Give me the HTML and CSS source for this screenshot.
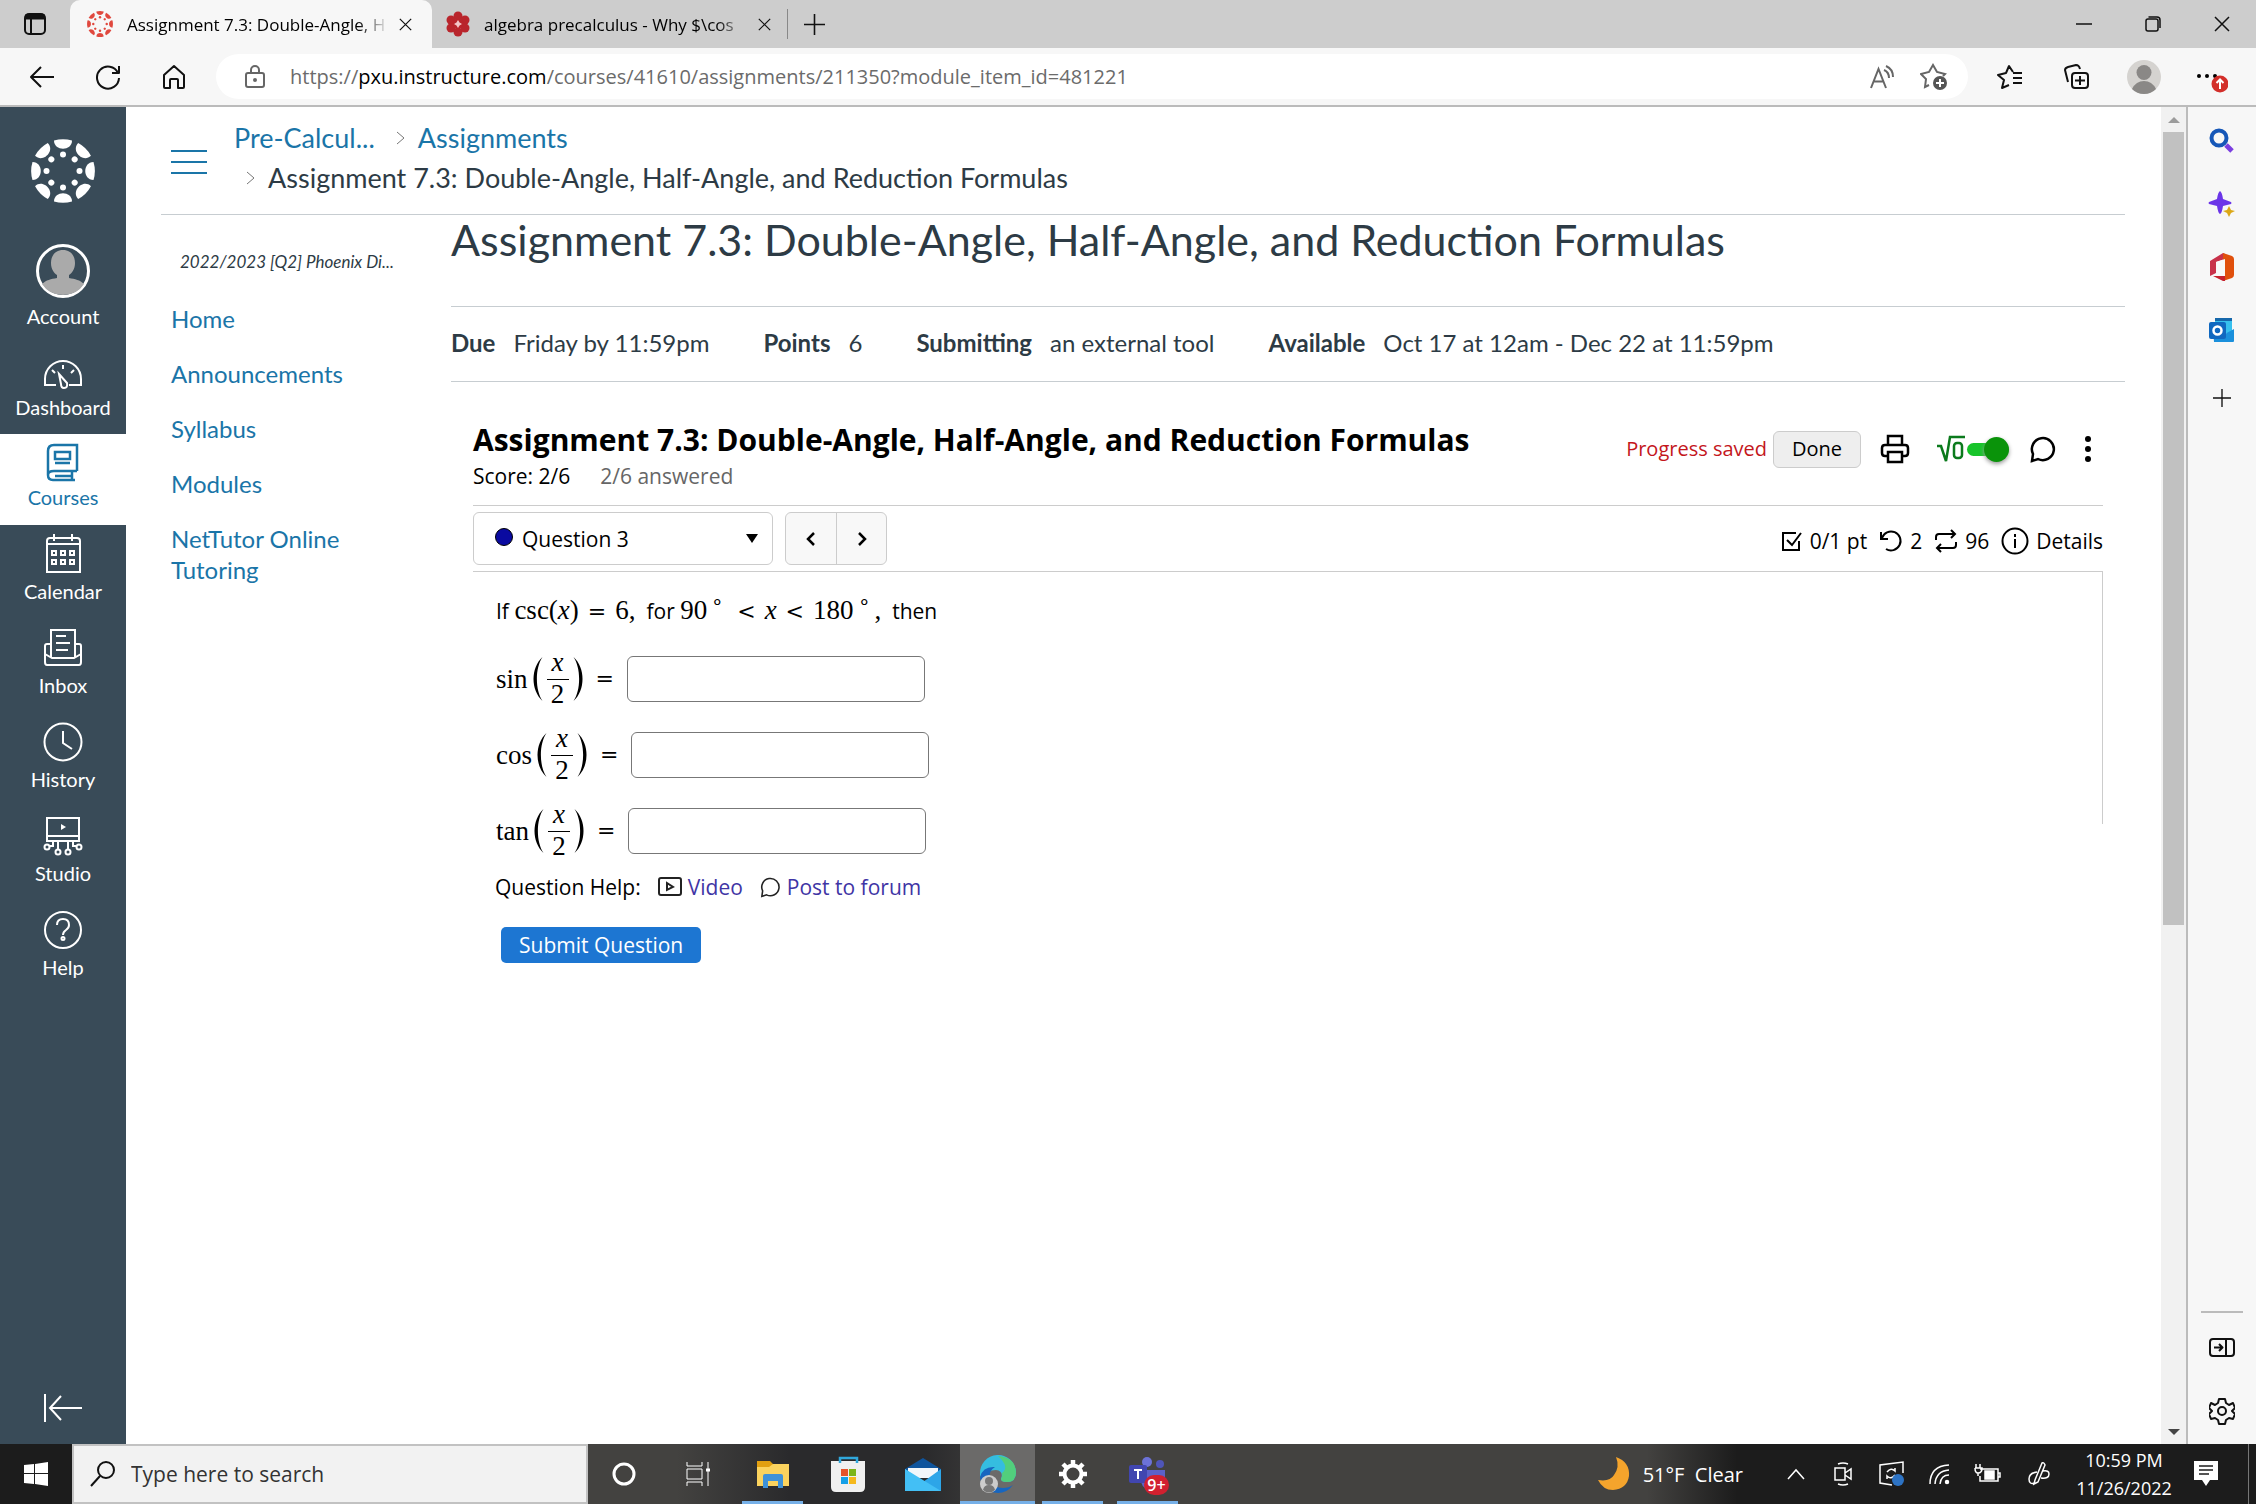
FILE: index.html
```html
<!DOCTYPE html>
<html lang="en">
<head>
<meta charset="utf-8">
<title>Assignment 7.3: Double-Angle, Half-Angle, and Reduction Formulas</title>
<link rel="stylesheet" href="styles.css">
</head>
<body>
<svg width="0" height="0" class="defs" aria-hidden="true">
  <defs>
    <g id="petals"><path d="M23 1.500a31 31 0 0 1 18 0c0 11-18 11-18 0z"/><circle cx="32" cy="15.500" r="3"/></g>
    <symbol id="canvas-mark" viewBox="0 0 64 64">
      <use href="#petals"/><use href="#petals" transform="rotate(45 32 32)"/><use href="#petals" transform="rotate(90 32 32)"/><use href="#petals" transform="rotate(135 32 32)"/><use href="#petals" transform="rotate(180 32 32)"/><use href="#petals" transform="rotate(225 32 32)"/><use href="#petals" transform="rotate(270 32 32)"/><use href="#petals" transform="rotate(315 32 32)"/>
    </symbol>
    <symbol id="x" viewBox="0 0 16 16"><path d="M1 1l14 14M15 1L1 15"/></symbol>
    <symbol id="plus" viewBox="0 0 20 20"><path d="M10 0v20M0 10h20"/></symbol>
    <symbol id="bubble" viewBox="0 0 26 28"><path d="M3 19a11 11 0 1 1 5 5l-6 2z"/></symbol>
    <symbol id="paren" viewBox="0 0 12 46"><path d="M10.500 1C-1.500 12-1.500 34 10.500 45C3 34 3 12 10.500 1z" fill="#000"/></symbol>
  </defs>
</svg>

<header class="tabs">
  <button class="tab-menu" aria-label="Tab actions"><svg width="24" height="24" viewBox="0 0 24 24" fill="none" stroke="#111" stroke-width="2"><rect x="2" y="2" width="20" height="20" rx="4"/><path d="M2 5h20" stroke-width="5"/><path d="M8 6v15"/></svg></button>
  <div class="tab active">
    <svg width="26" height="26" fill="#e0483e"><use href="#canvas-mark"/></svg>
    <span class="tab-title">Assignment 7.3: Double-Angle, H</span>
    <button aria-label="Close tab"><svg class="ln" width="13" height="13"><use href="#x"/></svg></button>
  </div>
  <div class="tab">
    <svg width="24" height="26" viewBox="0 0 24 26" fill="#b9252c"><circle cx="12" cy="5" r="4.500"/><circle cx="12" cy="21" r="4.500"/><circle cx="5" cy="9" r="4.500"/><circle cx="19" cy="9" r="4.500"/><circle cx="5" cy="17" r="4.500"/><circle cx="19" cy="17" r="4.500"/><circle cx="12" cy="13" r="5"/><path d="M12 9l1.500 2.500 2.500 1.500-2.500 1.500-1.500 2.500-1.500-2.500-2.500-1.500 2.500-1.500z" fill="#f3c6c8"/></svg>
    <span class="tab-title">algebra precalculus - Why $\cos</span>
    <button aria-label="Close tab"><svg class="ln" width="13" height="13"><use href="#x"/></svg></button>
  </div>
  <button class="new-tab" aria-label="New tab"><svg class="ln" width="21" height="21"><use href="#plus"/></svg></button>
  <div class="win">
    <button aria-label="Minimize"><svg class="ln" width="16" height="16"><path d="M0 8h16"/></svg></button>
    <button aria-label="Restore"><svg class="ln" width="16" height="16" fill="none"><rect x="1" y="3" width="12" height="12" rx="2"/><path d="M3.500 1H12q3 0 3 3v8"/></svg></button>
    <button aria-label="Close"><svg class="ln" width="16" height="16"><use href="#x"/></svg></button>
  </div>
</header>

<div class="toolbar">
  <div class="history">
    <button aria-label="Back"><svg class="ln2" width="26" height="24" viewBox="0 0 26 24"><path d="M25 12H2M12 2L2 12l10 10"/></svg></button>
    <button aria-label="Refresh"><svg class="ln2" width="26" height="26" viewBox="0 0 26 26"><path d="M23 9A11 11 0 1 0 24 14M24 2v7h-7"/></svg></button>
    <button aria-label="Home"><svg class="ln2" width="24" height="26" viewBox="0 0 24 26"><path d="M2 11L12 2l10 9v12q0 1-1 1h-5v-8q0-1-1-1H9q-1 0-1 1v8H3q-1 0-1-1z"/></svg></button>
  </div>
  <div class="address">
    <svg class="lock" width="20" height="24" viewBox="0 0 20 24" fill="none" stroke="#666" stroke-width="2"><rect x="1" y="8" width="18" height="14" rx="2"/><path d="M6 8V5a4 4 0 0 1 8 0v3"/><circle cx="10" cy="15" r="1" fill="#666"/></svg>
    <div class="url" role="textbox" aria-label="Address">https://<b>pxu.instructure.com</b>/courses/41610/assignments/211350?module_item_id=481221</div>
    <button aria-label="Read aloud"><svg class="gray" width="26" height="26" viewBox="0 0 26 26"><path d="M2 24L9.500 5 17 24M4.500 17.500h10M15 6q5 2 5 8M17 2q7 3 7 11"/></svg></button>
    <button aria-label="Add to favorites"><svg class="gray" width="28" height="28" viewBox="0 0 28 28"><path d="M9 22l-4 2 1-8-5-5 8-2 4-7 4 7 8 2-2 2"/><circle cx="20" cy="20" r="7" fill="#555" stroke="none"/><path d="M20 16v8M16 20h8" stroke="#fff"/></svg></button>
  </div>
  <div class="tools">
    <button aria-label="Favorites"><svg class="ln2" width="26" height="26" viewBox="0 0 26 26"><path d="M16 8l-4-6-3 7-8 2 6 5-2 8 7-3M16 9h9M16 14h9M16 19h9"/></svg></button>
    <button aria-label="Collections"><svg class="ln2" width="26" height="26" viewBox="0 0 26 26"><rect x="8" y="9" width="16" height="15" rx="3"/><path d="M16 12v9M11 16.500h10M4 18Q2 10 1 6q0-2 3-3l8-2q3 0 4 4"/></svg></button>
    <button aria-label="Profile"><svg width="34" height="34" viewBox="0 0 34 34"><circle cx="17" cy="17" r="17" fill="#d5d3d0"/><circle cx="17" cy="12.500" r="7.500" fill="#8a8886"/><path d="M5 29q4-8 12-8t12 8q-5 5-12 5T5 29z" fill="#8a8886"/></svg></button>
    <button aria-label="Settings and more"><svg width="34" height="34" viewBox="0 0 34 34"><circle cx="5" cy="16" r="2"/><circle cx="13" cy="16" r="2"/><circle cx="21" cy="16" r="2"/><circle cx="26" cy="24" r="8.500" fill="#d32f2a"/><path d="M26 29V19.500M22.500 23l3.500-3.500 3.500 3.500" fill="none" stroke="#fff" stroke-width="2"/></svg></button>
  </div>
</div>

<div class="window">
  <nav class="global" aria-label="Global navigation">
    <a href="#" class="logo" aria-label="Canvas"><svg width="64" height="64" fill="#fff"><use href="#canvas-mark"/></svg></a>
    <a href="#" class="account"><svg width="54" height="54" viewBox="0 0 54 54"><circle cx="27" cy="27" r="25.500" fill="#394b58" stroke="#fff" stroke-width="3"/><path d="M27 6c8 0 12 6 12 13 0 6-3 10-6 12v3c6 1 11 2 15 6q-7 11-21 11T6 40c4-4 9-5 15-6v-3c-3-2-6-6-6-12 0-7 4-13 12-13z" fill="#aaa" stroke="none"/></svg>Account</a>
    <a href="#" class="dash"><svg width="40" height="36" viewBox="0 0 40 36"><path d="M13 30H2v-6a18 18 0 0 1 36 0v6H26M20 10v4M9 15l3 3M31 15l-3 3M16 19l8 9q1 5-3 5-3 0-3-4z"/></svg>Dashboard</a>
    <a href="#" class="current"><svg width="40" height="40" viewBox="0 0 40 40"><path d="M34 28V2H11Q5 2 5 8v24q0 5 5 5h22M34 28H11q-6 0-6 4M29 28v9M12 33h17M12 9h15v7H12zM12 20h15" stroke-width="2.500"/></svg>Courses</a>
    <a href="#"><svg width="40" height="40" viewBox="0 0 40 40"><path d="M4 38V7q0-3 3-3h27q3 0 3 3v31zM4 10h33M11 0v7M29 0v7M9 17h4v4H9zM18 17h4v4h-4zM27 17h4v4h-4zM9 26h4v4H9zM18 26h4v4h-4zM27 26h4v4h-4z"/></svg>Calendar</a>
    <a href="#"><svg width="40" height="40" viewBox="0 0 40 40"><path d="M8 30V2h24v28M8 16H4q-2 0-2 2v16q0 3 2 3h32q2 0 2-3V18q0-2-2-2h-4M2 26l7 4h22l7-4M13 8h10M13 15h14M13 22h12"/></svg>Inbox</a>
    <a href="#"><svg width="40" height="40" viewBox="0 0 40 40"><circle cx="20" cy="20" r="18.500"/><path d="M20 9v12l9 6"/></svg>History</a>
    <a href="#"><svg width="40" height="40" viewBox="0 0 40 40"><path d="M4 2h32v23H4zM4 20h32M10 25v5H6M30 25v5h4M15 25v9M25 25v9"/><circle cx="4" cy="31" r="2.500"/><circle cx="36" cy="31" r="2.500"/><circle cx="15" cy="36" r="2.500"/><circle cx="25" cy="36" r="2.500"/><path d="M18 8l5 3-5 3z" fill="#fff" stroke="none"/></svg>Studio</a>
    <a href="#"><svg width="40" height="40" viewBox="0 0 40 40"><circle cx="20" cy="20" r="18"/><path d="M14 15q0-6 6-6t6 6q0 3-3 5t-3 5"/><circle cx="20" cy="28.500" r="1" stroke-width="3"/></svg>Help</a>
    <button class="collapse" aria-label="Minimize navigation"><svg width="40" height="30" viewBox="0 0 40 30"><path d="M2 1v28M39 15H7M18 3L7 15l11 12"/></svg></button>
  </nav>

  <main class="page">
    <div class="crumb-bar">
      <button class="burger" aria-label="Course menu"><i></i><i></i><i></i></button>
      <div class="crumbs">
        <div><a href="#">Pre-Calcul...</a><svg class="chev" width="10" height="16"><path d="M1 2l7 6-7 6"/></svg><a href="#">Assignments</a></div>
        <div class="second"><svg class="chev" width="10" height="16"><path d="M1 2l7 6-7 6"/></svg><span>Assignment 7.3: Double-Angle, Half-Angle, and Reduction Formulas</span></div>
      </div>
    </div>
    <div class="columns">
      <nav class="course" aria-label="Course navigation">
        <em>2022/2023 [Q2] Phoenix Di...</em>
        <a href="#">Home</a><a href="#">Announcements</a><a href="#">Syllabus</a><a href="#">Modules</a><a href="#">NetTutor Online Tutoring</a>
      </nav>
      <article>
        <h1>Assignment 7.3: Double-Angle, Half-Angle, and Reduction Formulas</h1>
        <dl class="details">
          <div><dt>Due</dt><dd>Friday by 11:59pm</dd></div>
          <div><dt>Points</dt><dd>6</dd></div>
          <div><dt>Submitting</dt><dd>an external tool</dd></div>
          <div><dt>Available</dt><dd>Oct 17 at 12am - Dec 22 at 11:59pm</dd></div>
        </dl>
        <section class="tool">
          <header class="tool-head">
            <div>
              <h2>Assignment 7.3: Double-Angle, Half-Angle, and Reduction Formulas</h2>
              <p>Score: 2/6<span class="answered">2/6 answered</span></p>
            </div>
            <div class="tool-actions">
              <span class="saved">Progress saved</span>
              <button class="done">Done</button>
              <button class="print" aria-label="Print"><svg width="30" height="30" viewBox="0 0 30 30" fill="none" stroke="#000" stroke-width="2.500"><path d="M8 11V2h14v9M8 22H5q-3 0-3-3v-5q0-3 3-3h20q3 0 3 3v5q0 3-3 3h-3M8 18h14v10H8z"/></svg></button>
              <label class="math-toggle"><svg width="30" height="30" viewBox="0 0 30 30" fill="none" stroke="#0b7a1c" stroke-width="2.500"><path d="M1 12h4l5 15 4-24h15"/><rect x="18" y="9" width="8" height="15" rx="3"/></svg><input type="checkbox" checked aria-label="Equation editor"></label>
              <button class="talk" aria-label="Messages"><svg width="26" height="28" fill="none" stroke="#000" stroke-width="2.500"><use href="#bubble"/></svg></button>
              <button class="more" aria-label="More"><svg width="8" height="28"><circle cx="4" cy="4" r="3"/><circle cx="4" cy="14" r="3"/><circle cx="4" cy="24" r="3"/></svg></button>
            </div>
          </header>
          <div class="question-bar">
            <div class="picker"><span class="dot"></span><select aria-label="Question"><option>Question 3</option></select><svg class="arrow" width="12" height="10"><path d="M0 1h12L6 10z"/></svg></div>
            <div class="steps"><button aria-label="Previous question"><svg width="10" height="16"><path d="M8 2L2 8l6 6"/></svg></button><button aria-label="Next question"><svg width="10" height="16"><path d="M2 2l6 6-6 6"/></svg></button></div>
            <div class="stats">
              <span><svg width="22" height="22" viewBox="0 0 22 22"><path d="M18 11v9H2V3h13M6 10l5 5 9-12"/></svg>0/1 pt</span>
              <span><svg width="24" height="24" viewBox="0 0 24 24"><path d="M2 3v7h7M3 9a9.500 9.500 0 1 1 4 11"/></svg>2</span>
              <span><svg width="24" height="24" viewBox="0 0 24 24"><path d="M2 11V8q0-3 3-3h16M17 1l4 4-4 4M22 13v3q0 3-3 3H3M7 15l-4 4 4 4"/></svg>96</span>
              <button><svg width="28" height="28" viewBox="0 0 28 28"><circle cx="14" cy="14" r="12.500"/><path d="M14 12v9M14 7v3"/></svg>Details</button>
            </div>
          </div>
          <form class="question">
            <p>If <span class="m">csc(<i>x</i>)</span><span class="op">=</span><span class="m">6,</span> &nbsp;for <span class="m">90<sup>∘</sup></span><span class="op">&lt;</span><span class="m"><i>x</i></span><span class="op">&lt;</span><span class="m">180<sup>∘</sup>,</span> &nbsp;then</p>
            <div class="row"><label for="a1"><span class="fn">sin</span><svg width="12" height="46"><use href="#paren"/></svg><span class="frac"><i>x</i><span>2</span></span><svg class="flip" width="12" height="46"><use href="#paren"/></svg><span class="op">=</span></label><input id="a1" type="text"></div>
            <div class="row"><label for="a2"><span class="fn">cos</span><svg width="12" height="46"><use href="#paren"/></svg><span class="frac"><i>x</i><span>2</span></span><svg class="flip" width="12" height="46"><use href="#paren"/></svg><span class="op">=</span></label><input id="a2" type="text"></div>
            <div class="row"><label for="a3"><span class="fn">tan</span><svg width="12" height="46"><use href="#paren"/></svg><span class="frac"><i>x</i><span>2</span></span><svg class="flip" width="12" height="46"><use href="#paren"/></svg><span class="op">=</span></label><input id="a3" type="text"></div>
          </form>
          <div class="help"><span>Question Help:</span>
            <a href="#"><svg width="24" height="20" viewBox="0 0 24 20"><rect x="1" y="1" width="22" height="17" rx="2"/><path d="M9 6l6 4-6 3z"/></svg>Video</a>
            <a href="#"><svg width="21" height="22"><use href="#bubble"/></svg>Post to forum</a>
          </div>
          <button class="submit">Submit Question</button>
        </section>
      </article>
    </div>
  </main>

  <div class="scroll" aria-hidden="true"><svg width="12" height="8"><path d="M0 7l6-6 6 6z" fill="#9b9b9b"/></svg><div class="track"><div class="thumb"></div></div><svg width="12" height="8"><path d="M0 1l6 6 6-6z" fill="#444"/></svg></div>

  <aside class="edge">
    <button aria-label="Search"><svg width="26" height="26" viewBox="0 0 26 26" fill="none"><path d="M17 17l6 6" stroke="#7b3fe0" stroke-width="5"/><circle cx="10" cy="10" r="7.500" stroke="#1657b8" stroke-width="4"/></svg></button>
    <button aria-label="Discover"><svg width="28" height="28" viewBox="0 0 28 28"><path d="M12 1q2 1 3 8l8 3q1 1 0 2l-8 2q-1 7-3 8-2-1-3-8l-8-2q-1-1 0-2l8-3q1-7 3-8z" fill="#6b35e8"/><path d="M21 16l2 4 4 1-4 2-2 4-2-4-4-2 4-1z" fill="#dca818"/></svg></button>
    <button aria-label="Office"><svg width="26" height="30" viewBox="0 0 26 30"><path d="M1 9l13-8 2 1v5l-9 3v11l-6 3z" fill="#c8324a"/><path d="M14 1l9 3q2 1 2 3v16q0 2-2 3l-9 3z" fill="#e0500c"/><path d="M4 24h12v5h-2z" fill="#c6212e"/><path d="M7 10l9-3v17H8z" fill="#f8f8f8"/></svg></button>
    <button aria-label="Outlook"><svg width="26" height="26" viewBox="0 0 26 26"><path d="M6 1h17v15H6z" fill="#36c0ee"/><path d="M6 1h17v3H6z" fill="#1668ab"/><path d="M4 12l10 6 11-6v12q0 1-1 1H5z" fill="#1a90dc"/><rect x="0" y="5" width="17" height="17" rx="2" fill="#1068c0"/><circle cx="8.500" cy="13.500" r="4" fill="none" stroke="#fff" stroke-width="2.500"/></svg></button>
    <button class="add" aria-label="Add"><svg class="ln" width="18" height="18"><use href="#plus"/></svg></button>
    <hr>
    <button aria-label="Hide sidebar"><svg class="ln2" width="26" height="20" viewBox="0 0 26 20"><rect x="1" y="1" width="24" height="17" rx="3"/><path d="M17 1v17M5 9.500h8M10 6l3.500 3.500L10 13"/></svg></button>
    <button aria-label="Settings"><svg class="ln2" width="26" height="28" viewBox="0 0 26 28"><path d="M10 2h6l1 4 3 2 4-2 2 5-3 3 3 3-2 5-4-1-3 2-1 4h-6l-1-4-3-2-4 1-2-5 3-3-3-3 2-5 4 2 3-2z"/><circle cx="13" cy="14" r="4"/></svg></button>
  </aside>
</div>

<footer class="taskbar">
  <button class="start" aria-label="Start"><svg width="24" height="24" viewBox="0 0 24 24" fill="#fff"><path d="M0 3l10-1v9H0zM11 2l13-2v11H11zM0 12h10v10L0 21zM11 12h13v12l-13-2z"/></svg></button>
  <label class="task-search"><svg width="26" height="26" viewBox="0 0 26 26" fill="none" stroke="#111" stroke-width="2"><circle cx="16" cy="9" r="8"/><path d="M10 15L1 25"/></svg><input type="text" placeholder="Type here to search" aria-label="Search"></label>
  <div class="apps">
    <button class="cortana" aria-label="Cortana"><svg width="24" height="24"><circle cx="12" cy="12" r="10" fill="none" stroke="#fff" stroke-width="3"/></svg></button>
    <button aria-label="Task view"><svg width="26" height="24" fill="none" stroke="#fff" stroke-width="1"><path d="M2 0v4h15V0M2 24v-4h15v4M2 7h15v10H2zM23 0v24"/><path d="M21 8h4" stroke-width="3"/></svg></button>
    <button class="open" aria-label="File Explorer"><svg width="34" height="28" viewBox="0 0 34 28"><path d="M1 1h13l3 3h14v8H1z" fill="#e2a010"/><path d="M1 7h12l4-3h16v22H1z" fill="#fbd35e"/><path d="M7 28V16q0-2 2-2h16q2 0 2 2v12h-5v-7H12v7z" fill="#3f92d8"/></svg></button>
    <button aria-label="Store"><svg width="36" height="36" viewBox="0 0 36 36"><path d="M10 9V2h17v7" fill="none" stroke="#30a8dc" stroke-width="2.500"/><path d="M1 5h34v26q0 5-5 5H6q-5 0-5-5z" fill="#f0f0f0"/><path d="M10 5v2M27 5v2" stroke="#30a8dc" stroke-width="2.500"/><path d="M11 13h7v7h-7z" fill="#e5532a"/><path d="M19 13h7v7h-7z" fill="#7cb518"/><path d="M11 21h7v7h-7z" fill="#15a0e8"/><path d="M19 21h7v7h-7z" fill="#f5b81c"/></svg></button>
    <button aria-label="Mail"><svg width="38" height="34" viewBox="0 0 38 34"><path d="M1 12L19 1l18 11v8H1z" fill="#0f549c"/><path d="M4 11h30v10H4z" fill="#f2f6fa"/><path d="M1 12l18 13 18-13v22H1z" fill="#2da5e8"/><path d="M1 12l36 22H1z" fill="#43bff5"/></svg></button>
    <button class="open on" aria-label="Edge"><svg width="38" height="38" viewBox="0 0 38 38"><path d="M1 19A18 18 0 0 1 37 17q0 10-9 10-6 0-6-3 3-8-5-9Q8 15 1 22z" fill="#35bde0"/><path d="M19 1q17 1 18 16 0 10-9 10-6 0-6-3 2-3 1-6Q31 12 19 1z" fill="#52cf7c"/><path d="M1 22Q4 11 16 12q-7 4-5 12 3 9 13 9 6 0 10-3-6 8-15 8Q3 37 1 22z" fill="#1766c0"/><circle cx="10" cy="29" r="9" fill="#ccc"/><circle cx="10" cy="26" r="4" fill="#777"/><path d="M4 35q1-5 6-5t6 5q-6 5-12 0z" fill="#777"/></svg></button>
    <button class="open" aria-label="Settings"><svg width="28" height="28" viewBox="0 0 28 28"><circle cx="14" cy="14" r="8.500" fill="none" stroke="#fff" stroke-width="4"/><path d="M14 0v5M14 23v5M0 14h5M23 14h5M4 4l4 4M20 20l4 4M24 4l-4 4M4 24l4-4" stroke="#fff" stroke-width="4.500"/></svg></button>
    <button class="open teams" aria-label="Teams"><svg width="38" height="34" viewBox="0 0 38 34"><circle cx="18" cy="5" r="5" fill="#6c72d8"/><circle cx="31" cy="7" r="4" fill="#4f55b8"/><path d="M12 13h24v12q-2 8-12 8t-12-8z" fill="#5b61c8"/><rect y="8" width="18" height="18" rx="2" fill="#4146b0"/><path d="M5 13h8M9 13v9" stroke="#fff" stroke-width="2"/></svg><span class="badge">9+</span></button>
  </div>
  <div class="tray">
    <button class="weather"><svg width="34" height="34" viewBox="0 0 34 34"><path d="M19 0q14 5 13 19-2 13-16 14Q6 33 1 23q12 2 16-5 6-8 2-18z" fill="#f5a42c"/></svg>51°F &nbsp;Clear</button>
    <button aria-label="Hidden icons"><svg width="18" height="12"><path d="M1 11l8-9 8 9"/></svg></button>
    <button aria-label="Meet now"><svg width="20" height="24"><path d="M1 6h10v12H1zM11 11l6-4v10l-6-4M4 2q5-2 10 0M4 22q5 2 10 0"/></svg></button>
    <button aria-label="Sync"><svg width="26" height="26"><path d="M24 12V1L1 4v18l12 2M8 11q4-5 8-1v-3M16 14q-4 5-8 1v3"/><circle cx="19" cy="19" r="6" fill="#2d73c4" stroke="none"/></svg></button>
    <button aria-label="Wi-Fi"><svg width="22" height="22"><path d="M1 21Q1 3 20 2M6 21Q7 8 20 7M11 21q1-9 9-9"/><circle cx="18" cy="19" r="1.500" fill="#fff"/></svg></button>
    <button aria-label="Battery"><svg width="28" height="20"><path d="M6 5h18v12H6v-5M24 9h2v4h-2"/><path d="M11 7h9v8h-9z" fill="#fff"/><path d="M2 0v4M6 0v4M1 4h7q0 5-4 5-3 0-3-5M4 9v3"/></svg></button>
    <button class="pen" aria-label="Pen"><svg width="22" height="24"><path d="M14 1L7 18l-1 4 4-2 7-17q-1-3-3-2zM9 10q-8 1-8 7 0 6 6 4M15 9q6-1 6 3 0 5-8 4"/></svg></button>
    <time>10:59 PM<br>11/26/2022</time>
    <button aria-label="Notifications"><svg width="24" height="26" viewBox="0 0 24 26"><path d="M0 0h24v19h-8l-4 6-4-6H0z" fill="#fff" stroke="none"/><path d="M5 5h14M5 9h14M5 13h10" stroke="#1c1c1c"/></svg></button>
    <span class="peek"></span>
  </div>
</footer>
</body>
</html>
```
FILE: styles.css
```css
* { box-sizing: border-box; }
body {
  margin: 0;
  min-height: 100vh;
  display: flex;
  flex-direction: column;
  background: #fff;
  font-family: "Open Sans", "Noto Sans", sans-serif;
  font-size: 20px;
  color: #000;
}
.defs { position: absolute; }
button {
  border: 0;
  background: none;
  padding: 0;
  font: inherit;
  color: inherit;
  display: flex;
  align-items: center;
  justify-content: center;
}
a { text-decoration: none; color: inherit; }
h1, h2, p, dl, dd { margin: 0; font-weight: 400; }
.ln { fill: none; stroke: #111; stroke-width: 1.500; }
.ln2 { fill: none; stroke: #111; stroke-width: 2; stroke-linejoin: round; }
.gray { fill: none; stroke: #666; stroke-width: 2; }

/* tab strip */
.tabs { display: flex; height: 48px; background: #cdcdcd; font-size: 17px; }
.tab-menu { width: 70px; }
.tab { display: flex; align-items: center; width: 355px; padding: 0 16px 0 14px; }
.tab.active { width: 362px; padding: 0 20px 0 17px; background: #f7f7f7; border-radius: 10px 10px 0 0; }
.tab-title {
  flex: 1;
  margin: 0 10px 0 14px;
  white-space: nowrap;
  mask-image: linear-gradient(to right, #000 88%, transparent);
}
.new-tab { align-self: center; height: 30px; padding: 0 16px; border-left: 1px solid #888; }
.win { display: flex; margin-left: auto; }
.win button { width: 69px; }

/* toolbar */
.toolbar { display: flex; align-items: center; height: 59px; background: #f7f7f7; border-bottom: 2px solid #bbb; }
.history { display: flex; width: 216px; padding-left: 9px; }
.history button { width: 66px; }
.address { flex: 1; display: flex; align-items: center; gap: 25px; height: 45px; padding: 0 20px 0 29px; border-radius: 23px; background: #fff; }
.url { flex: 1; font-size: 20px; color: #6b6b6b; }
.url b { font-weight: 400; color: #000; }
.tools { display: flex; width: 288px; padding-left: 8px; }
.tools button { width: 67px; }

/* window */
.window { flex: 1; display: flex; }
.global {
  display: flex;
  flex-direction: column;
  width: 126px;
  background: #394b58;
  color: #fff;
  font: 20px/24px Lato, sans-serif;
}
.global svg { fill: none; stroke: #fff; stroke-width: 2; }
.global .logo svg { fill: #fff; stroke: none; }
.global a { display: flex; flex-direction: column; align-items: center; gap: 5px; height: 94px; padding-top: 9px; }
.global .logo { height: 128px; padding-top: 32px; }
.global .account { height: 110px; gap: 6px; }
.global .dash { height: 89px; padding-top: 10px; gap: 4px; }
.global .current { height: 91px; gap: 2px; background: #fff; color: #1a75a8; }
.global .current svg { stroke: #1a75a8; }
.collapse { margin-top: auto; height: 72px; }

.page { flex: 1; min-width: 0; padding: 0 36px 0 35px; font-family: Lato, sans-serif; color: #2d3b45; }
.page a { color: #1a75a8; }
.crumb-bar { display: flex; gap: 27px; padding: 11px 0 16px 10px; border-bottom: 1px solid #c7cdd1; }
.burger { flex-direction: column; gap: 9px; width: 36px; height: 64px; padding-top: 23px; justify-content: flex-start; margin-top: 9px; }
.burger i { width: 36px; height: 2px; background: #1a75a8; }
.crumbs { font-size: 27px; line-height: 40px; }
.crumbs div { display: flex; align-items: center; }
.chev { fill: none; stroke: #777; margin: 0 12px 0 21px; }
.second .chev { margin-left: 12px; }
.columns { display: flex; }
.course { width: 290px; padding: 34px 70px 0 10px; font-size: 24px; line-height: 31px; display: flex; flex-direction: column; gap: 24px; }
.course em { font-size: 17px; line-height: 26px; white-space: nowrap; padding-left: 9px; margin-bottom: 4px; }
article { flex: 1; min-width: 0; }
h1 { font-size: 43px; line-height: 50px; padding-bottom: 41px; border-bottom: 1px solid #c7cdd1; }
.details { display: flex; gap: 54px; padding: 19px 0 22px; border-bottom: 1px solid #c7cdd1; font-size: 24px; line-height: 33px; }
.details div { display: flex; gap: 18px; }
dt { font-weight: 700; }

/* embedded tool */
.tool { margin: 37px 22px 0; font-family: "Open Sans", sans-serif; font-size: 21px; line-height: 30px; color: #000; }
.tool-head { display: flex; justify-content: space-between; height: 87px; border-bottom: 1px solid #ccc; }
h2 { font-size: 30px; line-height: 42px; font-weight: 700; }
.answered { color: #666; margin-left: 30px; }
.tool-actions { display: flex; align-items: center; height: 60px; font-size: 20px; }
.saved { color: #c4161c; }
.done { width: 88px; height: 37px; margin: 0 19px 0 6px; border: 1px solid #ccc; border-radius: 6px; background: #eee; }
.math-toggle { display: flex; align-items: center; gap: 1px; margin: 0 21px 0 26px; }
.math-toggle input { appearance: none; display: flex; justify-content: flex-end; align-items: center; margin: 0; width: 42px; height: 13px; border-radius: 7px; background: #17c42a; }
.math-toggle input::after { content: ""; width: 25px; height: 25px; border-radius: 50%; background: #0a930a; box-shadow: 0 2px 4px #999; }
.more { margin: 0 11px 0 28px; }
.question-bar { display: flex; align-items: center; gap: 12px; height: 66px; border-bottom: 1px solid #ccc; }
.picker { position: relative; width: 300px; height: 53px; }
.picker select { appearance: none; width: 100%; height: 100%; padding-left: 48px; border: 1px solid #ccc; border-radius: 6px; background: #fff; font: inherit; color: #000; }
.dot { position: absolute; left: 22px; top: 16px; width: 18px; height: 18px; border-radius: 50%; background: #0a0aa0; border: 1px solid #000; }
.arrow { position: absolute; right: 15px; top: 21px; }
.steps { display: flex; border: 1px solid #ccc; border-radius: 6px; background: #f8f8f8; }
.steps button { width: 50px; height: 51px; }
.steps button + button { border-left: 1px solid #ccc; }
.steps svg { fill: none; stroke: #000; stroke-width: 2.500; }
.stats { display: flex; align-items: center; gap: 12px; margin-left: auto; padding-top: 4px; }
.stats span, .stats button { display: flex; align-items: center; gap: 7px; }
.stats svg { fill: none; stroke: #000; stroke-width: 2; }
.question { padding: 20px 0 0 23px; height: 252px; border-right: 1px solid #ccc; }
.question p { line-height: 36px; margin-bottom: 26px; }
.m, .row label { font-family: "Liberation Serif", serif; font-size: 27px; }
.m sup { margin: 0 4px; font-size: 20px; line-height: 0; }
.op { margin: 0 9px; font-family: "DejaVu Serif", serif; font-size: 22px; font-weight: 400; }
.row { display: flex; align-items: center; gap: 4px; height: 46px; margin-bottom: 30px; }
.row label { display: flex; align-items: center; }
.row input { width: 298px; height: 46px; border: 1px solid #777; border-radius: 6px; font: inherit; padding: 0 10px; }
.row .op { margin-left: 12px; }
.fn { margin-right: 4px; }
.frac { display: flex; flex-direction: column; align-items: center; width: 22px; margin: 0 3px; line-height: 28px; }
.frac i { width: 100%; padding-bottom: 6px; line-height: 22px; text-align: center; border-bottom: 1px solid #000; }
.flip { transform: scaleX(-1); }
.help { display: flex; align-items: center; gap: 17px; margin-top: 48px; padding-left: 22px; }
.help a { display: flex; align-items: center; gap: 6px; color: #3f35a5; }
.help svg { fill: none; stroke: #222; stroke-width: 2; }
.submit { margin: 25px 0 0 28px; height: 36px; padding: 0 18px; border-radius: 5px; background: #1d76d2; color: #fff; }

.scroll { display: flex; flex-direction: column; align-items: center; width: 25px; padding: 9px 0 8px; background: #f1f1f1; }
.track { flex: 1; width: 21px; margin: 8px 0; }
.thumb { height: 61.6%; background: #c1c1c1; }

.edge { display: flex; flex-direction: column; align-items: center; width: 70px; padding: 2px 0; background: #f7f7f7; border-left: 2px solid #bbb; }
.edge button { width: 66px; height: 63px; }
.edge .add { margin-top: 5px; }
.edge hr { width: 42px; margin: auto 0 3px; border: 0; border-top: 2px solid #bbb; }

/* taskbar */
.taskbar { display: flex; height: 60px; background: linear-gradient(to right, #434240 30%, #2a2a2c 35%, #2a2a2c 41%, #434240 45%, #434240 73%, #1c1c1c 77%); color: #fff; }
.start { width: 72px; background: #1c1c1c; }
.task-search { display: flex; align-items: center; gap: 13px; width: 516px; padding-left: 16px; background: #f2f2f2; border: 2px solid #c2c2c2; }
.task-search input { flex: 1; border: 0; background: none; font: inherit; font-size: 21px; outline: 0; }
.task-search input::placeholder { color: #333; opacity: 1; }
.apps { display: flex; }
.apps button { width: 75px; }
.apps .cortana { width: 72px; }
.open { background: linear-gradient(#76b0e8, #76b0e8) bottom / 61px 3px no-repeat; }
.on { background: linear-gradient(#76b0e8, #76b0e8) bottom / 100% 3px no-repeat #6b6a69; }
.teams { position: relative; }
.badge { position: absolute; left: 34px; top: 31px; width: 25px; height: 20px; border-radius: 10px; background: #d1202f; font-size: 16px; line-height: 20px; font-weight: 600; }
.tray { display: flex; align-items: center; margin-left: auto; }
.tray button { width: 48px; }
.tray svg { fill: none; stroke: #fff; stroke-width: 1.500; }
.tray .weather { width: auto; gap: 12px; margin-right: 29px; font-size: 20px; }
.tray .weather svg { stroke: none; }
.tray .pen { width: 54px; }
.tray time { width: 116px; font-size: 18px; line-height: 28px; text-align: center; }
.peek { width: 8px; height: 60px; margin-left: 18px; border-left: 1px solid #777; }
```
